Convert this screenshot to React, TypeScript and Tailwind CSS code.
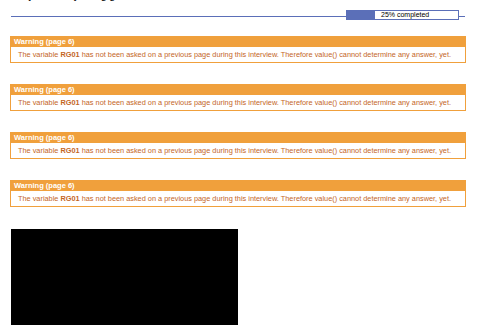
const warnings = [1, 2, 3, 4];

function Warning() {
  return (
    <div className="border border-[#f0a03c] bg-white">
      <div className="bg-[#f0a03c] h-[10px] px-[3px] text-[7.5px] leading-[10px] font-bold text-white">Warning (page 6)</div>
      <div className="h-[15px] px-[7px] text-[7.35px] leading-[15px] whitespace-nowrap text-[#c4661f]">
        The variable <b>RG01</b> has not been asked on a previous page during this interview. Therefore value() cannot determine any answer, yet.
      </div>
    </div>
  );
}

export default function App() {
  return (
    <div className="w-[500px] h-[325px] overflow-hidden bg-white" style={{ fontFamily: '"Liberation Sans", Arial, sans-serif' }}>
      <div className="h-[3px] overflow-hidden pl-[12px]">
        <div className="-mt-[10px] text-[11px] leading-[11px] text-black">Project B6 Hybrid gig</div>
      </div>
      <div className="relative mx-[11px] mt-[7px] w-[454px] h-[10px]">
        <div className="absolute left-0 right-0 top-[6px] h-px bg-[#5b6fb8]"></div>
        <div className="absolute left-[335px] top-0 w-[113px] h-[10px] border border-[#5b6fb8] bg-white flex">
          <div className="w-[28px] h-full bg-[#5b6fb8]"></div>
          <div className="pl-[6px] text-[7px] leading-[8px] text-black">25% completed</div>
        </div>
      </div>
      <div className="mt-[16px] ml-[10px] w-[456px] flex flex-col gap-[21px]">
        {warnings.map((w) => (
          <Warning key={w} />
        ))}
      </div>
      <div className="mt-[22px] ml-[11px] w-[227px] h-[120px] bg-black"></div>
    </div>
  );
}
